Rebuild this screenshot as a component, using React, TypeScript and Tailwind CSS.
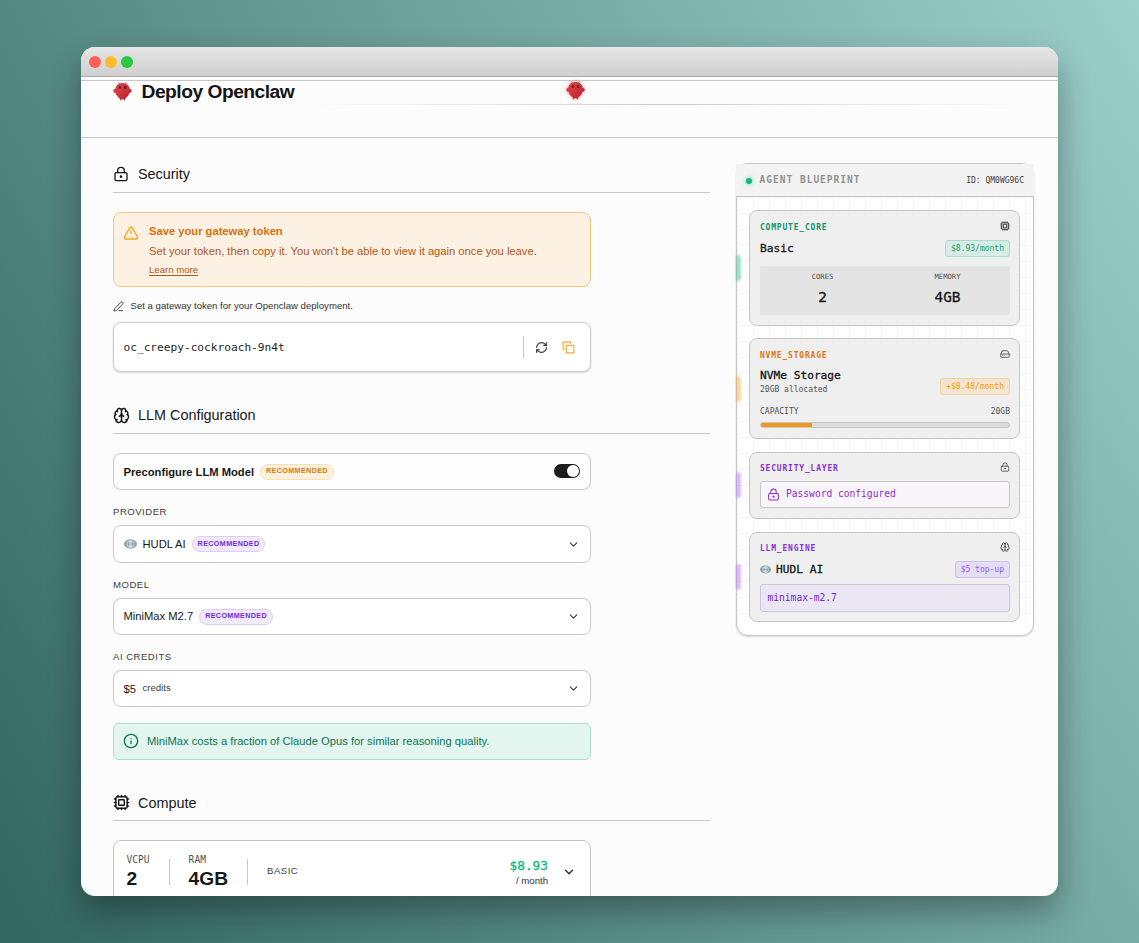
import React from "react";
import {
  Brain,
  ChevronDown,
  Cpu,
  HardDrive,
  Info,
  LockKeyhole,
  PenLine,
  RefreshCw,
  TriangleAlert,
} from "lucide-react";

const mono = "font-['DejaVu_Sans_Mono',monospace]";
const semi = "[-webkit-text-stroke:0.3px_currentColor]";

function Mascot({ className }: { className?: string }) {
  return (
    <svg viewBox="0 0 40 40" className={className} aria-hidden="true">
      <defs>
        <linearGradient id="shell" x1="0" y1="0" x2="1" y2="1">
          <stop offset="0" stopColor="#e2484c" />
          <stop offset="1" stopColor="#b8202b" />
        </linearGradient>
      </defs>
      <path d="M14 4 11.500 1M26 4l2.500-3" stroke="#e8686b" strokeWidth="1.600" strokeLinecap="round" />
      <path
        d="M20 2c8.500 0 13.500 4.500 15 11.500 2.500 1 4.500 2.500 4.500 5s-2 4-5 4.700C33 28.500 29.500 32.500 25.500 35v3.500h-3.500v-2.500h-4v2.500h-3.500v-3.500C10.500 32.500 7 28.500 5.500 23.200c-3-.7-5-2.200-5-4.700s2-4 4.500-5C6.500 6.500 11.500 2 20 2Z"
        fill="url(#shell)"
      />
      <ellipse cx="14.500" cy="11.500" rx="2.500" ry="2.800" fill="#4a181c" />
      <ellipse cx="25.500" cy="11.500" rx="2.500" ry="2.800" fill="#4a181c" />
      <circle cx="15" cy="11" r="0.700" fill="#57b8a5" />
      <circle cx="26" cy="11" r="0.700" fill="#57b8a5" />
    </svg>
  );
}

function HudlLogo({ className }: { className?: string }) {
  return (
    <svg viewBox="0 0 26 20" className={className} aria-hidden="true">
      <ellipse cx="13" cy="10" rx="13" ry="9.500" fill="#8fa3ad" />
      <ellipse cx="13" cy="10" rx="7.500" ry="7.500" fill="#d3dde1" />
      <path d="M5 10h16M9 5.500v9M17 5.500v9" stroke="#84a0ab" strokeWidth="1.800" />
    </svg>
  );
}

function CopyIcon({ className }: { className?: string }) {
  return (
    <svg viewBox="0 0 24 24" fill="none" stroke="currentColor" strokeWidth="2.200" className={className} aria-hidden="true">
      <path d="M8 8h14v14H8z" />
      <path d="M5 15H2V2h14v3" />
    </svg>
  );
}

function SectionHeading({
  icon,
  title,
  titlePad = "pt-[2px]",
}: {
  icon: React.ReactNode;
  title: string;
  titlePad?: string;
}) {
  return (
    <div className="flex h-[37px] items-center gap-[9px] border-b border-[#c9c9c9] text-[14.4px] text-[#171717]">
      <span className="flex w-4 justify-center">{icon}</span>
      <h2 className={titlePad}>{title}</h2>
    </div>
  );
}

function Pill({ tone }: { tone: "amber" | "violet" }) {
  const colors =
    tone === "amber"
      ? "border-[#fbdfb1] bg-[#fdf1de] text-[#d9770d]"
      : "border-[#dccdfa] bg-[#f1eafd] text-[#7228dc]";
  return (
    <span
      className={`flex h-4 items-center rounded-full border px-[5px] text-[7.2px] font-bold tracking-[0.05em] ${colors}`}
    >
      RECOMMENDED
    </span>
  );
}

function Field({
  label,
  height,
  children,
}: {
  label: string;
  height: string;
  children: React.ReactNode;
}) {
  return (
    <div className="flex flex-col">
      <div className="flex h-[35px] items-center pt-[9px] text-[9.6px] tracking-[0.05em] text-[#404040]">{label}</div>
      <div
        className={`flex items-center rounded-lg border border-[#c9c9c9] bg-white pr-[10px] pl-[9.500px] text-[11.2px] text-[#171717] ${height}`}
      >
        {children}
        <ChevronDown className="ml-auto size-[13px] text-[#333]" strokeWidth={2} />
      </div>
    </div>
  );
}

function Block({
  label,
  labelStyle,
  glow,
  glowTop,
  icon,
  className,
  children,
}: {
  label: string;
  labelStyle: string;
  glow: string;
  glowTop: string;
  icon: React.ReactNode;
  className: string;
  children: React.ReactNode;
}) {
  return (
    <div className={`relative rounded-lg border border-[#c6c6c6] bg-[#efefef] pr-[9px] pl-[10px] ${className}`}>
      <span className={`absolute -left-[14px] h-[26px] w-[5px] rounded-sm opacity-40 blur-[1px] ${glow} ${glowTop}`} />
      <div className="flex h-[29px] items-center justify-between">
        <span className={`text-[8px] font-bold tracking-[0.1em] ${labelStyle}`}>{label}</span>
        <span className="text-[#4a4a4a]">{icon}</span>
      </div>
      {children}
    </div>
  );
}

function Price({ className, children }: { className: string; children: React.ReactNode }) {
  return (
    <span className={`flex h-[17px] items-center rounded-[3px] border px-[5px] pt-px text-[8px] ${className}`}>
      {children}
    </span>
  );
}

function Blueprint() {
  return (
    <aside
      className={`h-[473px] w-[298px] rounded-xl border border-[#c6c6c6] bg-white shadow-[0_1px_2px_rgba(0,0,0,0.14)] ${mono}`}
    >
      <header className="-mx-px flex h-[33px] items-center border-b border-[#c6c6c6] bg-[#f3f3f3] px-[10px] pt-px">
        <span className="size-[6px] rounded-full bg-[#10b981] shadow-[0_0_5px_rgba(16,185,129,0.6)]" />
        <span className="ml-[7.500px] text-[9.6px] font-bold tracking-[0.1em] text-[#929292]">AGENT BLUEPRINT</span>
        <span className="ml-auto text-[8px] text-[#404040]">ID: QM0WG96C</span>
      </header>
      <div className="flex flex-col gap-[13px] bg-[repeating-linear-gradient(to_right,#f4f4f4_0_1px,transparent_1px_16px),repeating-linear-gradient(to_bottom,#f4f4f4_0_1px,transparent_1px_16px)] pt-[13px] pr-[13px] pl-[12px]">
        <Block
          label="COMPUTE_CORE"
          labelStyle="pt-[4px] text-[#0f9467]"
          glow="bg-[#10b981]"
          glowTop="top-[44px]"
          icon={<Cpu className="size-[10px]" strokeWidth={2.5} />}
          className="h-[116px]"
        >
          <div className="mt-px flex h-[15px] items-center justify-between">
            <span className={`pt-px text-[11.2px] text-[#171717] ${semi}`}>Basic</span>
            <Price className="-mt-px border-[#a5dfcb] bg-[#d8ebe4] text-[#10a674]">$8.93/month</Price>
          </div>
          <div className="mt-[10px] grid h-[49px] grid-cols-2 rounded-xs bg-[#e4e4e4] text-center">
            <div className="flex flex-col items-center pt-[5px]">
              <span className="text-[7.2px] leading-[11px] text-[#525252]">CORES</span>
              <span className={`mt-[4px] text-[14.4px] leading-[22px] text-[#171717] ${semi}`}>2</span>
            </div>
            <div className="flex flex-col items-center pt-[5px]">
              <span className="text-[7.2px] leading-[11px] text-[#525252]">MEMORY</span>
              <span className={`mt-[4px] text-[14.4px] leading-[22px] text-[#171717] ${semi}`}>4GB</span>
            </div>
          </div>
        </Block>

        <Block
          label="NVME_STORAGE"
          labelStyle="pt-[4px] text-[#dc7612]"
          glow="bg-[#f59e0b]"
          glowTop="top-[37px]"
          icon={<HardDrive className="size-[10px]" strokeWidth={2} />}
          className="-mt-px h-[101px]"
        >
          <div className="flex h-[27px] items-end justify-between">
            <div className="flex h-full flex-col pt-px">
              <span className={`text-[11.2px] leading-[14px] text-[#171717] ${semi}`}>NVMe Storage</span>
              <span className="text-[8px] leading-[14px] text-[#525252]">20GB allocated</span>
            </div>
            <Price className="border-[#f3d39d] bg-[#f1e4d0] text-[#f59e0b]">+$0.48/month</Price>
          </div>
          <div className="mt-[11px] flex h-[12px] items-center justify-between text-[8px] text-[#525252]">
            <span>CAPACITY</span>
            <span>20GB</span>
          </div>
          <div className="mt-[4px] h-[6px] overflow-hidden rounded-full border border-[#c6c6c6] bg-[#dcdcdc]">
            <div className="h-full w-[20.500%] bg-[#ee9a1c]" />
          </div>
        </Block>

        <Block
          label="SECURITY_LAYER"
          labelStyle="pt-[3px] text-[#8b2fc9]"
          glow="bg-[#a855f7]"
          glowTop="top-[19px]"
          icon={<LockKeyhole className="mb-[2px] size-[10px]" strokeWidth={2} />}
          className="h-[67px]"
        >
          <div className="-mt-px flex h-[27px] items-center gap-[6px] rounded-[3px] border border-[#c6c6c6] bg-[#f8f5fb] px-[6px] text-[9.6px] text-[#9028cf]">
            <LockKeyhole className="size-[13px]" strokeWidth={1.9} />
            Password configured
          </div>
        </Block>

        <Block
          label="LLM_ENGINE"
          labelStyle="pt-[3px] text-[#8b2fdc]"
          glow="bg-[#a855f7]"
          glowTop="top-[31px]"
          icon={<Brain className="mb-[2px] size-[10px]" strokeWidth={2.2} />}
          className="h-[90px]"
        >
          <div className="flex h-[15px] items-center">
            <HudlLogo className="h-[9px] w-[11px]" />
            <span className={`ml-[5px] pt-[2px] text-[11.2px] text-[#171717] ${semi}`}>HUDL AI</span>
            <Price className="ml-auto border-[#d0c0ee] bg-[#e5ddf3] text-[#8b5cf6]">$5 top-up</Price>
          </div>
          <div className="mt-[7px] flex h-[28px] items-center rounded-[3px] border border-[#cfc3e6] bg-[#eae6f2] px-[6.500px] text-[9.6px] text-[#6d28d9]">
            minimax-m2.7
          </div>
        </Block>
      </div>
    </aside>
  );
}

export default function App() {
  return (
    <div className="h-[943px] w-[1139px] bg-[linear-gradient(60deg,#32655e_0%,#9ccfca_100%)] px-[81px] pt-[47px] font-['Liberation_Sans',sans-serif]">
      <div className="flex h-[849px] w-[977px] flex-col overflow-hidden rounded-[14px] bg-[#fcfcfc] shadow-[0_16px_32px_rgba(0,0,0,0.33)]">
        <div className="flex h-[30px] shrink-0 items-center gap-1 border-b border-[#a9a9a9] bg-linear-to-b from-[#e6e6e6] to-[#cfcfcf] px-[8px]">
          <span className="size-3 rounded-full bg-[#fe5f57]" />
          <span className="size-3 rounded-full bg-[#febb2e]" />
          <span className="size-3 rounded-full bg-[#28c840]" />
        </div>

        <header className="mt-[3px] h-[58px] shrink-0 border-t border-b border-[#c6c6c6] px-8">
          <div className="relative flex h-[22px] items-center">
            <Mascot className="mb-px size-[19px]" />
            <h1 className="ml-[9.500px] text-[19.2px] leading-none font-bold tracking-tight text-[#141414]">
              Deploy Openclaw
            </h1>
            <Mascot className="absolute top-0 left-[453px] size-[19px] drop-shadow-[0_0_2px_rgba(239,68,68,0.5)]" />
          </div>
          <div className="mt-[1px] ml-[200px] h-px bg-linear-to-r from-transparent via-[#cccccc] to-transparent" />
        </header>

        <main className="flex justify-between pr-6 pl-8">
          <div className="w-[597px]">
            <div className="pt-[18px]">
              <SectionHeading icon={<LockKeyhole className="size-[16px] shrink-0" strokeWidth={2} />} title="Security" />
            </div>
            <div className="w-[478px]">
              <div className="mt-[19px] flex h-[75px] gap-[10px] rounded-lg border border-[#f3c77c] bg-[#fcf1e2] px-[9px] pt-[10px]">
                <TriangleAlert className="mt-[2px] size-4 shrink-0 text-[#f5a524]" strokeWidth={2} />
                <div className="text-[#b4551b]">
                  <div className="text-[11.2px] leading-[16px] font-bold text-[#d97208]">Save your gateway token</div>
                  <div className="mt-[4px] text-[11.2px] leading-[16px]">
                    Set your token, then copy it. You won&apos;t be able to view it again once you leave.
                  </div>
                  <span className="mt-[5px] block w-fit border-b border-[#b4551b] text-[9.6px] leading-[11px]">
                    Learn more
                  </span>
                </div>
              </div>
              <div className="mt-[12px] flex h-[14px] items-center gap-[6.500px] text-[9.6px] text-[#333]">
                <PenLine className="mt-px size-[11px]" strokeWidth={2} />
                Set a gateway token for your Openclaw deployment.
              </div>
              <div className="mt-[9px] flex h-[50px] items-center rounded-lg border border-[#cccccc] bg-white px-[9.500px] shadow-[0_1px_2px_rgba(0,0,0,0.15)]">
                <span className={`pt-[2px] text-[11.2px] tracking-[-0.02px] text-[#262626] ${mono}`}>
                  oc_creepy-cockroach-9n4t
                </span>
                <span className="ml-auto h-[22px] w-px bg-[#c9c9c9]" />
                <RefreshCw className="ml-[11px] size-[13px] text-[#333]" strokeWidth={2} />
                <CopyIcon className="mr-[5.500px] ml-[14px] size-[13px] text-[#f2a93b]" />
              </div>
            </div>

            <div className="mt-[25px]">
              <SectionHeading icon={<Brain className="size-[17px] shrink-0" strokeWidth={2.1} />} title="LLM Configuration" />
            </div>
            <div className="w-[478px]">
              <div className="mt-[19px] flex h-[37px] items-center gap-[6px] rounded-lg border border-[#c9c9c9] bg-[#fefefe] pr-[10px] pl-[9.500px] text-[11.2px] font-bold text-[#171717]">
                <span className="pt-px">Preconfigure LLM Model</span>
                <Pill tone="amber" />
                <span className="mb-px ml-auto flex h-[14px] w-[26px] items-center justify-end rounded-full bg-[#1c1c1c] px-px">
                  <span className="size-[12px] rounded-full bg-white" />
                </span>
              </div>
              <Field label="PROVIDER" height="h-[38px]">
                <HudlLogo className="mr-[6px] h-[10px] w-[13px]" />
                <span className="mr-[6px] pt-px">HUDL AI</span>
                <Pill tone="violet" />
              </Field>
              <Field label="MODEL" height="h-[37px]">
                <span className="mr-[6px]">MiniMax M2.7</span>
                <Pill tone="violet" />
              </Field>
              <Field label="AI CREDITS" height="h-[37px]">
                <span className="pt-px">$5</span>
                <span className="ml-[6.500px] text-[9.6px] text-[#404040]">credits</span>
              </Field>
              <div className="mt-[16px] flex h-[37px] items-center gap-[8px] rounded-md border border-[#a9dfce] bg-[#e2f5ee] px-[9px] text-[11.2px] text-[#0b7454]">
                <Info className="mb-px size-4" strokeWidth={2} />
                MiniMax costs a fraction of Claude Opus for similar reasoning quality.
              </div>
            </div>

            <div className="mt-[24px]">
              <SectionHeading
                icon={<Cpu className="mt-px size-[17px] shrink-0" strokeWidth={2.1} />}
                title="Compute"
                titlePad="pt-[3px]"
              />
            </div>
            <div className="mt-[19px] flex h-[75px] w-[478px] rounded-lg border border-[#c4c4c4] bg-white px-[12.500px] pt-[12px]">
              <div>
                <div className={`text-[9.6px] leading-[14px] text-[#525252] ${mono}`}>VCPU</div>
                <div className="mt-px text-[19.2px] leading-[22px] font-bold text-[#171717]">2</div>
              </div>
              <span className="mt-[6px] ml-[19px] h-[26px] w-px bg-[#c9c9c9]" />
              <div className="ml-[19px]">
                <div className={`text-[9.6px] leading-[14px] text-[#525252] ${mono}`}>RAM</div>
                <div className="mt-px text-[19.2px] leading-[22px] font-bold text-[#171717]">4GB</div>
              </div>
              <span className="mt-[6px] ml-[19px] h-[26px] w-px bg-[#c9c9c9]" />
              <span className="mt-[12px] ml-[19px] text-[9.6px] leading-[12px] tracking-[0.05em] text-[#404040]">BASIC</span>
              <div className="ml-auto pt-[5px] text-right">
                <div className={`text-[12.8px] leading-[16px] text-[#10b981] [-webkit-text-stroke:0.3px_#10b981] ${mono}`}>$8.93</div>
                <div className="text-[9.6px] leading-[14px] text-[#333]">/ month</div>
              </div>
              <ChevronDown className="mt-[12px] mr-[1.500px] ml-[14px] size-[14px] text-[#262626]" strokeWidth={2.2} />
            </div>
          </div>

          <div className="pt-[25px]">
            <Blueprint />
          </div>
        </main>
      </div>
    </div>
  );
}
